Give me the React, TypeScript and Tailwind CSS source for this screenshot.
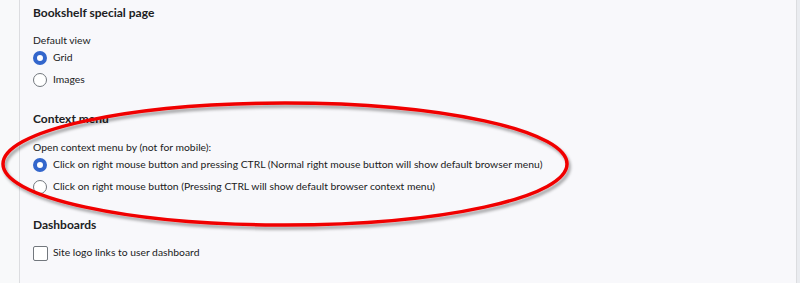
import React from "react";

function Radio({ checked, label }: { checked?: boolean; label: string }) {
  return (
    <label className="flex h-[22px] items-center gap-[6px]">
      <span
        className={
          checked
            ? "h-[14px] w-[14px] shrink-0 rounded-full border-[4px] border-[#3366cc] bg-white"
            : "h-[14px] w-[14px] shrink-0 rounded-full border border-[#72777d] bg-white"
        }
      />
      <span>{label}</span>
    </label>
  );
}

function Section({ title, children }: { title: string; children: React.ReactNode }) {
  return (
    <div>
      <h3 className="h-[26px] text-[12px] font-bold leading-[26px]">{title}</h3>
      {children}
    </div>
  );
}

export default function App() {
  return (
    <div
      className="relative flex h-[283px] w-[800px] overflow-hidden bg-[#f8f9fa] text-[10.35px] text-[#202122]"
      style={{ fontFamily: "Lato, 'Liberation Sans', sans-serif" }}
    >
      <div className="w-[20px] shrink-0 border-r border-[#dcdde0]" />
      <div className="flex flex-1 flex-col border-r border-[#dcdde0] bg-[#f8f8fb] pl-[13px]">
        <Section title="Bookshelf special page">
          <div className="mt-[7px] h-[14px] leading-[14px]">Default view</div>
          <Radio checked label="Grid" />
          <Radio label="Images" />
        </Section>

        <div className="mt-[15px]">
          <Section title="Context menu">
            <div className="mt-[8px] h-[14px] leading-[14px]">Open context menu by (not for mobile):</div>
            <Radio checked label="Click on right mouse button and pressing CTRL (Normal right mouse button will show default browser menu)" />
            <Radio label="Click on right mouse button (Pressing CTRL will show default browser context menu)" />
          </Section>
        </div>

        <div className="mt-[14px]">
          <Section title="Dashboards">
            <label className="mt-[4px] flex h-[22px] items-center gap-[5px]">
              <span className="h-[15px] w-[15px] shrink-0 rounded-[2px] border border-[#72777d] bg-white" />
              <span>Site logo links to user dashboard</span>
            </label>
          </Section>
        </div>
      </div>
      <div className="w-[3px] shrink-0 bg-[#eaecf0]" />

      {/* red annotation ellipse */}
      <svg className="pointer-events-none absolute left-0 top-0" width="800" height="283">
        <defs>
          <filter id="sh" x="-10%" y="-20%" width="120%" height="140%">
            <feDropShadow dx="2" dy="3" stdDeviation="1.5" floodColor="#000" floodOpacity="0.35" />
          </filter>
        </defs>
        <ellipse
          cx="285"
          cy="164"
          rx="282"
          ry="61"
          fill="none"
          stroke="#f00000"
          strokeWidth="3.5"
          filter="url(#sh)"
        />
      </svg>
    </div>
  );
}
